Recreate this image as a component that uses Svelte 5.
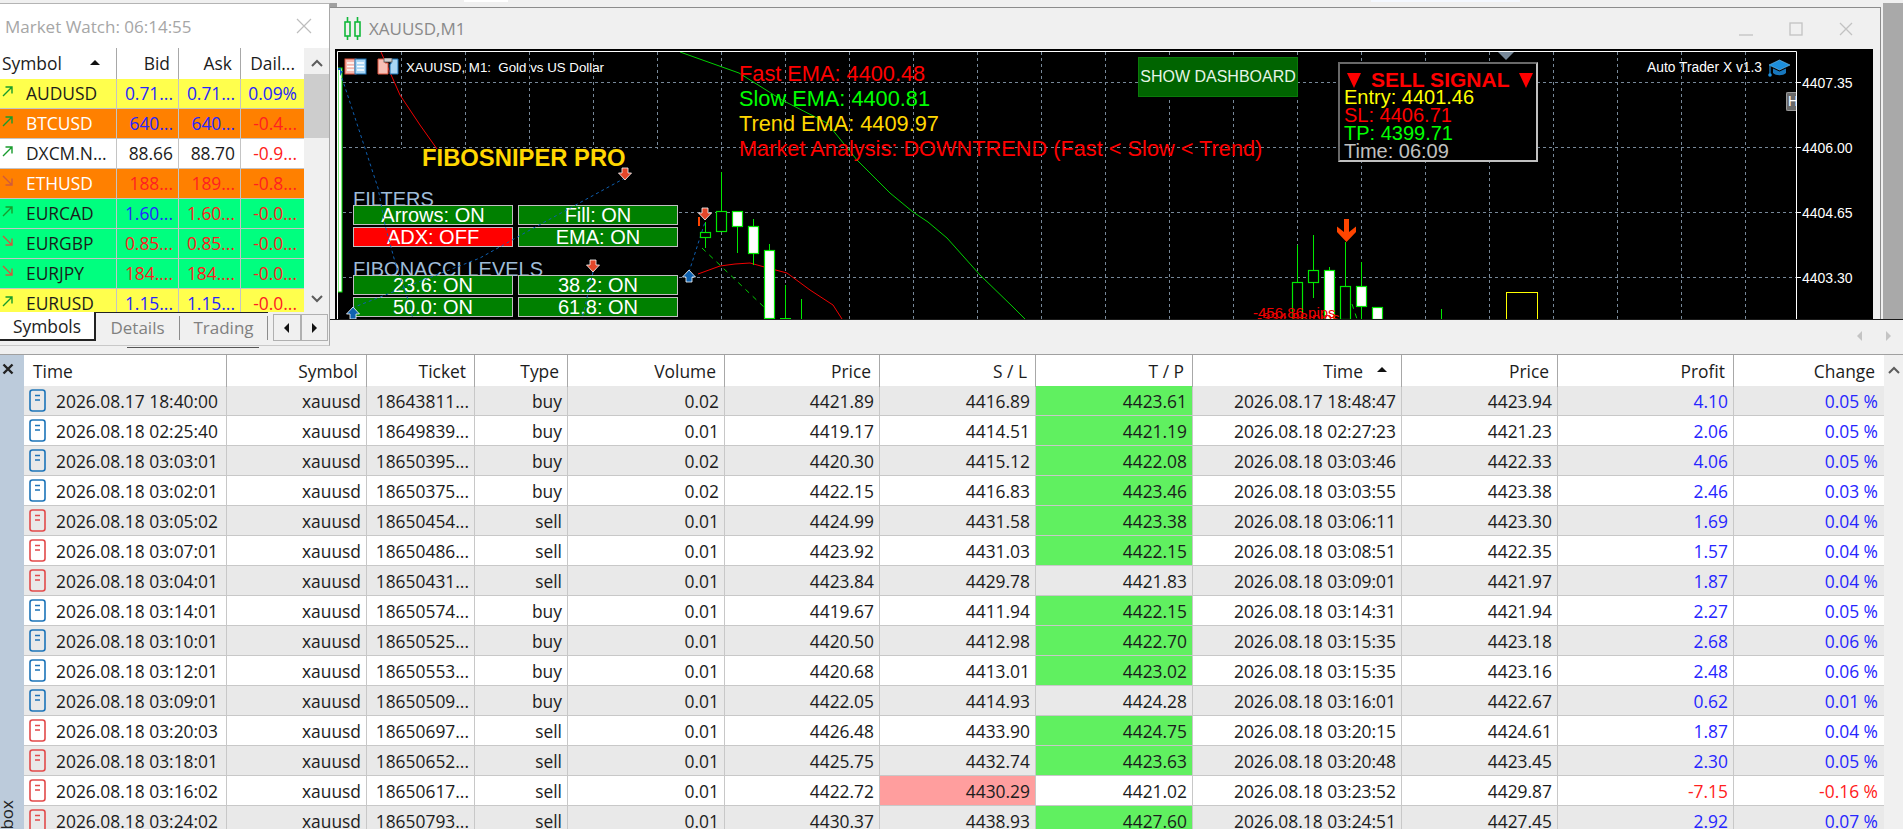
<script>
  const market = [
    { s: 'AUDUSD', d: 'up', bg: 'yellow', bid: '0.71...', bc: 'blue', ask: '0.71...', ac: 'blue', day: '0.09%', dc: 'blue' },
    { s: 'BTCUSD', d: 'up', bg: 'orange', bid: '640...', bc: 'blue', ask: '640...', ac: 'blue', day: '-0.4...', dc: 'red' },
    { s: 'DXCM.N...', d: 'up', bg: 'white', bid: '88.66', bc: 'ink', ask: '88.70', ac: 'ink', day: '-0.9...', dc: 'red' },
    { s: 'ETHUSD', d: 'down', bg: 'orange', bid: '188...', bc: 'red', ask: '189...', ac: 'red', day: '-0.8...', dc: 'red' },
    { s: 'EURCAD', d: 'up', bg: 'green', bid: '1.60...', bc: 'blue', ask: '1.60...', ac: 'red', day: '-0.0...', dc: 'red' },
    { s: 'EURGBP', d: 'down', bg: 'green', bid: '0.85...', bc: 'red', ask: '0.85...', ac: 'red', day: '-0.0...', dc: 'red' },
    { s: 'EURJPY', d: 'down', bg: 'green', bid: '184....', bc: 'red', ask: '184....', ac: 'red', day: '-0.0...', dc: 'red' },
    { s: 'EURUSD', d: 'up', bg: 'yellow', bid: '1.15...', bc: 'blue', ask: '1.15...', ac: 'blue', day: '-0.0...', dc: 'red' }
  ];

  const heads = ['Symbol', 'Ticket', 'Type', 'Volume', 'Price', 'S / L', 'T / P'];
  const trades = [
    ['2026.08.17 18:40:00', '18643811...', 'buy', '0.02', '4421.89', '4416.89', '4423.61', '2026.08.17 18:48:47', '4423.94', '4.10', '0.05 %', 'g'],
    ['2026.08.18 02:25:40', '18649839...', 'buy', '0.01', '4419.17', '4414.51', '4421.19', '2026.08.18 02:27:23', '4421.23', '2.06', '0.05 %', 'g'],
    ['2026.08.18 03:03:01', '18650395...', 'buy', '0.02', '4420.30', '4415.12', '4422.08', '2026.08.18 03:03:46', '4422.33', '4.06', '0.05 %', 'g'],
    ['2026.08.18 03:02:01', '18650375...', 'buy', '0.02', '4422.15', '4416.83', '4423.46', '2026.08.18 03:03:55', '4423.38', '2.46', '0.03 %', 'g'],
    ['2026.08.18 03:05:02', '18650454...', 'sell', '0.01', '4424.99', '4431.58', '4423.38', '2026.08.18 03:06:11', '4423.30', '1.69', '0.04 %', 'g'],
    ['2026.08.18 03:07:01', '18650486...', 'sell', '0.01', '4423.92', '4431.03', '4422.15', '2026.08.18 03:08:51', '4422.35', '1.57', '0.04 %', 'g'],
    ['2026.08.18 03:04:01', '18650431...', 'sell', '0.01', '4423.84', '4429.78', '4421.83', '2026.08.18 03:09:01', '4421.97', '1.87', '0.04 %', ''],
    ['2026.08.18 03:14:01', '18650574...', 'buy', '0.01', '4419.67', '4411.94', '4422.15', '2026.08.18 03:14:31', '4421.94', '2.27', '0.05 %', 'g'],
    ['2026.08.18 03:10:01', '18650525...', 'buy', '0.01', '4420.50', '4412.98', '4422.70', '2026.08.18 03:15:35', '4423.18', '2.68', '0.06 %', 'g'],
    ['2026.08.18 03:12:01', '18650553...', 'buy', '0.01', '4420.68', '4413.01', '4423.02', '2026.08.18 03:15:35', '4423.16', '2.48', '0.06 %', 'g'],
    ['2026.08.18 03:09:01', '18650509...', 'buy', '0.01', '4422.05', '4414.93', '4424.28', '2026.08.18 03:16:01', '4422.67', '0.62', '0.01 %', ''],
    ['2026.08.18 03:20:03', '18650697...', 'sell', '0.01', '4426.48', '4433.90', '4424.75', '2026.08.18 03:20:15', '4424.61', '1.87', '0.04 %', 'g'],
    ['2026.08.18 03:18:01', '18650652...', 'sell', '0.01', '4425.75', '4432.74', '4423.63', '2026.08.18 03:20:48', '4423.45', '2.30', '0.05 %', 'g'],
    ['2026.08.18 03:16:02', '18650617...', 'sell', '0.01', '4422.72', '4430.29', '4421.02', '2026.08.18 03:23:52', '4429.87', '-7.15', '-0.16 %', 'r'],
    ['2026.08.18 03:24:02', '18650793...', 'sell', '0.01', '4430.37', '4438.93', '4427.60', '2026.08.18 03:24:51', '4427.45', '2.92', '0.07 %', 'g']
  ];

  const vgrid = Array.from({ length: 22 }, (_, i) => 401.5 + 64 * i);
  const hgrid = [82.5, 147.5, 212.5, 277.5];
  const prices = [
    { p: '4407.35', y: 83 },
    { p: '4406.00', y: 148 },
    { p: '4404.65', y: 213 },
    { p: '4403.30', y: 278 }
  ];
  const filters = [
    { t: 'Arrows: ON' }, { t: 'Fill: ON' }, { t: 'ADX: OFF', off: true }, { t: 'EMA: ON' }
  ];
  const levels = [{ t: '23.6: ON' }, { t: '38.2: ON' }, { t: '50.0: ON' }, { t: '61.8: ON' }];

  // x centre, wick top, wick bottom, body top, body bottom, filled
  const candles = [
    [705.5, 222, 248, 232, 237, false],
    [721.5, 172, 232, 211, 231, false],
    [737.5, 226, 253, 211, 226, true],
    [753.5, 219, 265, 226, 253, true],
    [769.5, 244, 319, 250, 318, true],
    [1297.5, 245, 319, 282, 319, false],
    [1313.5, 235, 298, 270, 282, false],
    [1329.5, 267, 319, 270, 319, true],
    [1345.5, 242, 319, 286, 319, false],
    [1361.5, 262, 319, 286, 306, true],
    [1377.5, 307, 319, 307, 319, true]
  ];
  const downMarks = [[625, 174], [593, 266], [705, 214]];
  const upMarks = [[353, 313], [689, 276]];
</script>

<div class="app">
  <i class="sliver s1"></i>
  <i class="sliver s2"></i>
  <i class="sliver s3"></i>
  <div class="upper">
    <div class="mwcol">
      <section class="mw">
        <header class="mw-title">
          <span>Market Watch: 06:14:55</span>
          <svg class="mw-x" viewBox="0 0 16 16"><path d="M1 1 15 15M15 1 1 15" /></svg>
        </header>
        <div class="mw-body">
          <div class="mw-list">
            <div class="mw-head">
              <span class="mh-sym">Symbol<i class="sort"></i></span>
              <span class="mh-num">Bid</span>
              <span class="mh-num">Ask</span>
              <span class="mh-num last">Dail...</span>
            </div>
            {#each market as m}
              <div class="mw-row {m.bg}">
                <span class="m-sym">
                  <svg class="m-arrow {m.d}" viewBox="0 0 12 12">
                    {#if m.d === 'up'}
                      <path d="M1 11 10 2M3.5 2H10V8.5" />
                    {:else}
                      <path d="M1 1 10 10M10 3.5V10H3.5" />
                    {/if}
                  </svg>
                  <b class:light={m.bg === 'orange'}>{m.s}</b>
                </span>
                <span class="m-num {m.bc}">{m.bid}</span>
                <span class="m-num {m.ac}">{m.ask}</span>
                <span class="m-num last {m.dc}">{m.day}</span>
              </div>
            {/each}
          </div>
          <div class="mw-scroll">
            <svg class="chev" viewBox="0 0 12 8"><path d="M1 7 6 2 11 7" /></svg>
            <div class="thumb"></div>
            <svg class="chev down" viewBox="0 0 12 8"><path d="M1 1 6 6 11 1" /></svg>
          </div>
        </div>
        <div class="tabs">
          <span class="tab active">Symbols</span>
          <span class="tab"><em>Details</em></span>
          <span class="tab trading"><em>Trading</em></span>
          <span class="tab-nav">
            <span><i class="tri-l"></i></span>
            <span><i class="tri-r"></i></span>
          </span>
        </div>
      </section>
      <div class="grip"></div>
    </div>

    <div class="rightcol">
      <div class="top">
        <div class="win">
          <div class="titlebar">
            <svg class="tb-icon" viewBox="0 0 17 23">
              <path d="M3.5 0V23M13.5 0V23" />
              <rect x="1" y="5" width="5" height="14" />
              <rect x="11" y="5" width="5" height="14" />
            </svg>
            <span class="tb-name">XAUUSD,M1</span>
            <svg class="wc min" viewBox="0 0 14 14"><path d="M0 13H14" /></svg>
            <svg class="wc" viewBox="0 0 14 14"><rect x="1" y="1" width="12" height="12" /></svg>
            <svg class="wc" viewBox="0 0 14 14"><path d="M1 1 13 13M13 1 1 13" /></svg>
          </div>

          <div class="chart">
            <svg class="layer" viewBox="335 49 1538 270">
              <g class="grid">
                {#each vgrid as x}<line x1={x} x2={x} y1="52" y2="319" />{/each}
                {#each hgrid as y}<line x1="343" x2="1796" y1={y} y2={y} />{/each}
              </g>
              <g class="tick">
                {#each hgrid as y}<line x1="1796" x2="1801" y1={y} y2={y} />{/each}
              </g>
              <path class="ln red" d="M381 52 400 95 420 125 437 149" />
              <path class="ln grn" d="M680 52 739 73 782 100 827 123 857 160 890 193 913 212 928 222 947 238 980 275 1013 307 1025 319" />
              <path class="ln red" d="M698 274 720 266 735 264 750 263 768 268 787 273 810 290 833 305 842 319" />
              <path class="ln grn dash" d="M702 248 765 308" />
              <path class="ln grn dash" d="M1352 304 1357 319" />
              <rect class="yb" x="1506.5" y="292.5" width="31" height="30" />
              <rect class="wbar" x="338" y="68" width="4" height="224" />
              <path class="ln plot" d="M337.5 319V51.5H1796.5V319" />
              <polygon class="notch" points="1498,52 1514,52 1506,60" />
            </svg>

            <div class="dash">
              <div class="d-title">FIBOSNIPER PRO</div>
              <div class="d-head first">FILTERS</div>
              <div class="d-grid">
                {#each filters as b}
                  <div class="d-btn" class:off={b.off}>{b.t}</div>
                {/each}
              </div>
              <div class="d-head">FIBONACCI LEVELS</div>
              <div class="d-grid">
                {#each levels as b}
                  <div class="d-btn">{b.t}</div>
                {/each}
              </div>
            </div>

            <svg class="layer" viewBox="335 49 1538 270">
              <path class="dots" d="M342 78 378 188 385 225 395 262 406 293 413 319" />
              <path class="dots" d="M352 308 480 258 530 230 625 178" />
              <path class="dots" d="M689 272 705 222" />
              <path class="dots" d="M593 272 582 319" />
              {#each candles as c}
                <line class="wick" x1={c[0]} x2={c[0]} y1={c[1]} y2={c[2]} />
                <rect class="body" class:fill={c[5]} x={c[0] - 5} y={c[3] + 0.5} width="10" height={c[4] - c[3]} />
              {/each}
              <path class="wick" d="M785.5 285V318M780 318.5H791M801.5 299V319M1441.5 309V319" />
              {#each downMarks as a}
                <path class="mark-d" transform="translate({a[0]} {a[1]})" d="M-3 -6H3V-1H6.5L0 6 -6.5 -1H-3Z" />
              {/each}
              {#each upMarks as a}
                <path class="mark-u" transform="translate({a[0]} {a[1]})" d="M-3 6H3V1H6.5L0 -6 -6.5 1H-3Z" />
              {/each}
              <path class="mark-b" d="M338 68H341V71H343L340 76H340V70H338Z" />
              <rect class="oj" x="698" y="217" width="2" height="9" />
              <path class="big-arrow" d="M1344 219H1349V232L1356 226.500V232L1346.500 242 1337 232V226.500L1344 232Z" />
            </svg>

            <svg class="ic-table" viewBox="0 0 23 17">
              <rect class="p" x="1" y="1" width="11" height="15" />
              <rect class="b" x="11" y="1" width="11" height="15" />
              <path class="rw" d="M3 5H10M3 8.500H10M3 12H10" />
              <path class="rb" d="M13 5H20M13 8.500H20M13 12H20" />
            </svg>
            <svg class="ic-save" viewBox="0 0 22 17">
              <path class="p" d="M1 1H8V5H11V16H1Z" />
              <path class="b" d="M14 1H21V16H13V6H14Z" />
              <rect class="gr" x="7" y="0" width="8" height="4" />
            </svg>
            <div class="sym">XAUUSD, M1:  Gold vs US Dollar</div>

            <div class="ema">
              <div class="red-t">Fast EMA: 4400.48</div>
              <div class="lime-t">Slow EMA: 4400.81</div>
              <div class="gold-t">Trend EMA: 4409.97</div>
              <div class="red-t">Market Analysis: DOWNTREND (Fast &lt; Slow &lt; Trend)</div>
            </div>

            <div class="show">SHOW DASHBOARD</div>

            <div class="signal">
              <div class="sig-head"><i></i><b>SELL SIGNAL</b><i></i></div>
              <div class="yel-t">Entry: 4401.46</div>
              <div class="red-t">SL: 4406.71</div>
              <div class="lime-t">TP: 4399.71</div>
              <div class="sil-t">Time: 06:09</div>
            </div>

            <div class="auto">Auto Trader X v1.3</div>
            <svg class="ic-cap" viewBox="0 0 23 19">
              <path class="cap-a" d="M11.500 1 22 6 11.500 11 1 6Z" />
              <path class="cap-b" d="M5 9.500V14C8 17 15 17 18 14V9.500L11.500 12.500Z" />
              <path class="cap-c" d="M2 6V15" />
              <circle class="cap-d" cx="2" cy="16" r="1.800" />
            </svg>
            <div class="hbtn">H</div>

            <div class="pips one">-456.86 pips</div>
            <div class="pips two">-334.88 pips</div>

            {#each prices as p}
              <div class="price" style="top:{p.y - 59}px">{p.p}</div>
            {/each}
          </div>
        </div>
        <div class="gutter"></div>
      </div>
      <div class="band">
        <i class="tri-l soft"></i>
        <i class="tri-r soft"></i>
      </div>
    </div>
  </div>

  <div class="lower">
    <aside class="strip">
      <svg class="strip-x" viewBox="0 0 12 12"><path d="M1.500 1.500 10.500 10.500M10.500 1.500 1.500 10.500" /></svg>
      <span class="strip-label">Toolbox</span>
    </aside>
    <div class="table">
      <div class="tr head">
        <div class="th left">Time</div>
        {#each heads as h}<div class="th">{h}</div>{/each}
        <div class="th timeclose">Time<i class="sort"></i></div>
        <div class="th">Price</div>
        <div class="th">Profit</div>
        <div class="th end">Change</div>
      </div>
      {#each trades as t, i}
        <div class="tr row" class:alt={i % 2 === 0}>
          <div class="td first">
            <svg class="doc {t[2]}" viewBox="0 0 17 23">
              <rect x="1" y="1" width="15" height="21" rx="2.500" />
              <path d="M6 6.500H11M6 11H11" />
            </svg>
            {t[0]}
          </div>
          <div class="td">xauusd</div>
          <div class="td">{t[1]}</div>
          <div class="td">{t[2]}</div>
          <div class="td">{t[3]}</div>
          <div class="td">{t[4]}</div>
          <div class="td" class:hit-r={t[11] === 'r'}>{t[5]}</div>
          <div class="td tp" class:hit-g={t[11] === 'g'}>{t[6]}</div>
          <div class="td">{t[7]}</div>
          <div class="td">{t[8]}</div>
          <div class="td" class:pos={t[11] !== 'r'} class:neg={t[11] === 'r'}>{t[9]}</div>
          <div class="td end" class:pos={t[11] !== 'r'} class:neg={t[11] === 'r'}>{t[10]}</div>
        </div>
      {/each}
    </div>
    <div class="vscroll">
      <svg class="chev" viewBox="0 0 12 8"><path d="M1 7 6 2 11 7" /></svg>
    </div>
  </div>
</div>

<style>
  :global(body) {
    margin: 0;
    background: #f0f0f0;
  }
  .app {
    position: relative;
    width: 1903px;
    height: 829px;
    overflow: hidden;
    background: #f0f0f0;
    font-family: "Open Sans", "Noto Sans", sans-serif;
    font-size: 17px;
    color: #1c1c1c;
  }
  .sliver {
    position: absolute;
    top: 0;
    height: 2px;
    background: #fff;
  }
  .s1 { left: 464px; width: 44px; }
  .s2 { left: 1371px; width: 149px; background: #f4f8ff; }
  .s3 { left: 330px; top: 3px; width: 7px; height: 4px; background: #a0a0a0; }
  .upper {
    display: flex;
    height: 355px;
    border-bottom: 1px solid #a0a0a0;
    box-sizing: border-box;
  }

  /* market watch */
  .mwcol {
    width: 330px;
    flex: none;
    padding-top: 3px;
    box-sizing: border-box;
  }
  .mw {
    height: 343px;
    box-sizing: border-box;
    background: #fff;
    border-top: 1px solid #b4b4b4;
    border-right: 1px solid #a8a8a8;
    border-bottom: 1px solid #c8c8c8;
    display: flex;
    flex-direction: column;
  }
  .grip {
    height: 1px;
    width: 132px;
    margin: 1px 0 0 127px;
    background: #555;
  }
  .mw-title {
    height: 44px;
    flex: none;
    display: flex;
    align-items: center;
    justify-content: space-between;
    padding: 0 17px 0 5px;
    color: #a6a6a6;
  }
  .mw-x {
    width: 16px;
    height: 16px;
  }
  .mw-x path {
    stroke: #bdbdbd;
    stroke-width: 1.2;
    fill: none;
  }
  .mw-body {
    height: 264px;
    flex: none;
    display: flex;
    overflow: hidden;
  }
  .mw-list {
    width: 304px;
    flex: none;
    font-size: 17.4px;
  }
  .mw-head {
    height: 31px;
    display: grid;
    grid-template-columns: 117px 62px 62px 63px;
    line-height: 30px;
  }
  .mh-sym {
    padding-left: 2px;
    display: flex;
    position: relative;
    border-right: 1px solid #a8a8a8;
  }
  .sort {
    width: 0;
    height: 0;
    border-left: 5px solid transparent;
    border-right: 5px solid transparent;
    border-bottom: 5px solid #111;
  }
  .mh-sym .sort {
    position: absolute;
    left: 90px;
    top: 12px;
  }
  .mh-num {
    text-align: right;
    padding-right: 8px;
    border-right: 1px solid #a8a8a8;
  }
  .mh-num.last {
    border-right: 0;
    padding-right: 9px;
  }
  .mw-row {
    height: 30px;
    box-sizing: border-box;
    display: grid;
    grid-template-columns: 117px 62px 62px 63px;
    border-bottom: 1px solid #c4c4c4;
    line-height: 29px;
  }
  .mw-row.yellow { background: #ffff4d; }
  .mw-row.orange { background: #ff8000; }
  .mw-row.white { background: #fff; }
  .mw-row.green { background: #00ff7f; }
  .m-sym {
    display: flex;
    align-items: center;
    border-right: 1px solid #c4c4c4;
    overflow: hidden;
  }
  .m-sym b {
    font-weight: 400;
    margin-left: 12px;
  }
  .m-sym b.light { color: #fff; }
  .m-arrow {
    width: 12px;
    height: 12px;
    margin: -5px 0 0 2px;
    flex: none;
    fill: none;
    stroke-width: 1.4;
  }
  .m-arrow.up { stroke: #189c2c; }
  .m-arrow.down { stroke: #cf5a3c; }
  .m-num {
    text-align: right;
    padding-right: 5px;
    border-right: 1px solid #c4c4c4;
    white-space: nowrap;
    overflow: hidden;
  }
  .m-num.last {
    border-right: 0;
    padding-right: 7px;
  }
  .m-num.blue { color: #2626ff; }
  .m-num.red { color: #ff2020; }
  .m-num.ink { color: #1c1c1c; }
  .mw-scroll {
    flex: 1;
    background: #f0f0f0;
    display: flex;
    flex-direction: column;
    align-items: center;
  }
  .chev {
    width: 12px;
    height: 8px;
    fill: none;
    stroke: #5c5c5c;
    stroke-width: 2;
    flex: none;
  }
  .mw-scroll .chev {
    margin-top: 11px;
  }
  .mw-scroll .chev.down {
    margin-top: 157px;
  }
  .thumb {
    width: 100%;
    height: 64px;
    flex: none;
    margin-top: 7px;
    background: #cdcdcd;
  }
  .tabs {
    flex: 1;
    display: flex;
    background: #f0f0f0;
    line-height: 29px;
    color: #808080;
  }
  .tab {
    height: 30px;
    box-sizing: border-box;
    border-top: 1px solid #222;
    width: 84px;
    padding-top: 3px;
    text-align: center;
  }
  .tab em {
    font-style: normal;
    display: block;
    height: 24px;
    line-height: 24px;
    border-right: 1px solid #8c8c8c;
  }
  .tab.trading {
    width: 88px;
  }
  .tab.active {
    width: 96px;
    height: 29px;
    padding: 0;
    font-size: 17.4px;
    line-height: 28px;
    background: #fff;
    color: #222;
    border-top: 0;
    border-right: 2px solid #222;
    border-bottom: 2px solid #222;
  }
  .tab-nav {
    margin: 2px 0 0 5px;
    height: 27px;
    width: 55px;
    box-sizing: border-box;
    border: 1px solid #b0b0b0;
    display: flex;
  }
  .tab-nav span {
    flex: 1;
    display: flex;
    align-items: center;
    justify-content: center;
  }
  .tab-nav span + span {
    border-left: 2px solid #b0b0b0;
  }
  .tri-l, .tri-r {
    display: block;
    width: 0;
    height: 0;
    border-top: 5px solid transparent;
    border-bottom: 5px solid transparent;
  }
  .tri-l { border-right: 5px solid #111; }
  .tri-r { border-left: 5px solid #111; }

  /* chart window */
  .rightcol {
    flex: 1;
    display: flex;
    flex-direction: column;
    min-width: 0;
  }
  .top {
    height: 319px;
    display: flex;
  }
  .win {
    width: 1551px;
    flex: none;
    box-sizing: border-box;
    margin-top: 7px;
    border-top: 1px solid #8c8c8c;
    border-right: 1px solid #8c8c8c;
    padding-left: 5px;
    display: flex;
    flex-direction: column;
  }
  .gutter {
    width: 20px;
    margin: 3px 0 0 2px;
    background: #a9a9a9;
  }
  .titlebar {
    height: 41px;
    width: 1538px;
    flex: none;
    display: flex;
    align-items: center;
    padding: 0 20px 0 9px;
    box-sizing: border-box;
  }
  .tb-icon {
    width: 17px;
    height: 23px;
    fill: #f0f0f0;
    stroke: #12b83a;
    stroke-width: 1.6;
    flex: none;
  }
  .tb-name {
    margin-left: 8px;
    color: #8a8a8a;
    margin-right: auto;
  }
  .wc {
    width: 14px;
    height: 14px;
    margin-left: 36px;
    fill: none;
    stroke: #c2c2c2;
    stroke-width: 1.3;
    flex: none;
  }
  .chart {
    position: relative;
    width: 1538px;
    height: 270px;
    background: #000;
    overflow: hidden;
    font-family: "Liberation Sans", Arial, sans-serif;
  }
  .layer {
    position: absolute;
    left: 0;
    top: 0;
    width: 1538px;
    height: 270px;
  }
  .grid line {
    stroke: #778899;
    stroke-dasharray: 3 3;
    stroke-width: 1;
  }
  .tick line { stroke: #fff; }
  .ln { fill: none; stroke-width: 1; }
  .ln.red { stroke: #f00000; }
  .ln.grn { stroke: #00d000; }
  .ln.dash { stroke-dasharray: 5 5; }
  .ln.plot { stroke: #fff; }
  .yb { fill: none; stroke: #ffff00; }
  .wbar { fill: #fff; stroke: #00e000; stroke-width: 1; }
  .notch { fill: #778899; }
  .dots {
    fill: none;
    stroke: #0f5fb0;
    stroke-width: 1;
    stroke-dasharray: 3 3;
  }
  .wick {
    stroke: #00e800;
    stroke-width: 1;
    fill: none;
  }
  .body {
    fill: #000;
    stroke: #00e800;
    stroke-width: 1.2;
  }
  .body.fill { fill: #fff; }
  .mark-d {
    fill: #e4472a;
    stroke: #fff;
    stroke-width: 0.8;
  }
  .mark-u {
    fill: #0f62b0;
    stroke: #fff;
    stroke-width: 0.8;
  }
  .mark-b { fill: #1266b8; }
  .oj { fill: #ff4500; }
  .big-arrow { fill: #ff4500; }

  .dash {
    position: absolute;
    left: 18px;
    top: 100px;
    width: 325px;
    height: 170px;
    background: #000;
  }
  .d-title {
    margin-left: 69px;
    height: 18px;
    line-height: 18px;
    font-size: 23.8px;
    font-weight: 700;
    color: #ffd700;
    white-space: nowrap;
  }
  .d-head {
    height: 15px;
    line-height: 19px;
    margin-top: 13px;
    font-size: 20px;
    color: #9fbcd8;
    white-space: nowrap;
  }
  .d-head.first { margin-top: 23px; }
  .d-grid {
    display: grid;
    grid-template-columns: 160px 160px;
    grid-auto-rows: 20px;
    column-gap: 5px;
    row-gap: 2px;
    position: relative;
  }
  .d-btn {
    box-sizing: border-box;
    background: #008000;
    border: 1px solid #c0c0c0;
    color: #fff;
    font-size: 20px;
    line-height: 18px;
    text-align: center;
    white-space: nowrap;
  }
  .d-btn.off { background: #ff0000; }

  .ic-table {
    position: absolute;
    left: 9px;
    top: 9px;
    width: 23px;
    height: 17px;
  }
  .ic-table .p { fill: #f6b7ae; stroke: #e0523c; }
  .ic-table .b { fill: #a9d6f5; stroke: #1b6fb0; }
  .ic-table .rw, .ic-table .rb { stroke: #fff; stroke-width: 1.4; fill: none; }
  .ic-save {
    position: absolute;
    left: 42px;
    top: 9px;
    width: 22px;
    height: 17px;
  }
  .ic-save .p { fill: #f6c0b6; stroke: #e0523c; }
  .ic-save .b { fill: #a9d6f5; stroke: #1b6fb0; }
  .ic-save .gr { fill: #cfcfcf; stroke: #555; stroke-width: 0.8; }

  .sym {
    position: absolute;
    left: 71px;
    top: 9px;
    line-height: 20px;
    font-size: 13.3px;
    color: #fff;
    white-space: pre;
  }
  .ema {
    position: absolute;
    left: 404px;
    top: 12px;
    font-size: 21.75px;
    line-height: 25px;
    white-space: nowrap;
  }
  .red-t { color: #ff0000; }
  .lime-t { color: #00ff00; }
  .gold-t { color: #ffd700; }
  .yel-t { color: #ffff00; }
  .sil-t { color: #c0c0c0; }

  .show {
    position: absolute;
    left: 803px;
    top: 8px;
    width: 160px;
    height: 40px;
    box-sizing: border-box;
    background: #006400;
    border: 1px solid #0a7a0a;
    color: #e6f5e6;
    font-size: 16px;
    line-height: 38px;
    text-align: center;
    white-space: nowrap;
  }
  .signal {
    position: absolute;
    left: 1003px;
    top: 13px;
    width: 200px;
    height: 100px;
    box-sizing: border-box;
    background: #000;
    border: 2px solid;
    border-color: #696969 #c0c0c0 #c0c0c0 #696969;
    padding: 8px 0 0 4px;
    font-size: 20px;
    line-height: 18px;
    white-space: nowrap;
  }
  .sig-head {
    display: flex;
    align-items: center;
    height: 16px;
    margin-left: 3px;
    color: #ff0000;
  }
  .sig-head b {
    font-size: 21px;
    margin: 0 10px;
  }
  .sig-head i {
    width: 0;
    height: 0;
    border-left: 7.5px solid transparent;
    border-right: 7.5px solid transparent;
    border-top: 15px solid #ff0000;
  }
  .auto {
    position: absolute;
    left: 1312px;
    top: 9px;
    line-height: 20px;
    font-size: 13.8px;
    color: #fff;
    white-space: nowrap;
  }
  .ic-cap {
    position: absolute;
    left: 1433px;
    top: 10px;
    width: 23px;
    height: 19px;
  }
  .cap-a { fill: #1d8fdc; stroke: #7cc6f4; stroke-width: 0.6; }
  .cap-b { fill: #1877bd; }
  .cap-c { stroke: #1d8fdc; stroke-width: 1.2; fill: none; }
  .cap-d { fill: #1d8fdc; }
  .hbtn {
    position: absolute;
    left: 1451px;
    top: 43px;
    width: 10px;
    height: 19px;
    box-sizing: border-box;
    background: #696969;
    border: 1px solid #9a9a9a;
    border-right: 0;
    border-radius: 2px 0 0 2px;
    color: #fff;
    font-size: 14px;
    line-height: 17px;
    padding-left: 1px;
    overflow: hidden;
  }
  .pips {
    position: absolute;
    font-size: 15px;
    line-height: 18px;
    color: #f00000;
    white-space: nowrap;
  }
  .pips.one { left: 918px; top: 255px; }
  .pips.two { left: 922px; top: 260px; }
  .price {
    position: absolute;
    left: 1467px;
    line-height: 20px;
    font-size: 14px;
    color: #fff;
  }
  .band {
    height: 35px;
    box-sizing: border-box;
    border-top: 1px solid #1a1a1a;
    display: flex;
    align-items: center;
    justify-content: flex-end;
    gap: 24px;
    padding: 0 12px 2px 0;
  }
  .tri-l.soft { border-right-color: #c4c4c4; }
  .tri-r.soft { border-left-color: #c4c4c4; }

  /* terminal table */
  .lower {
    display: flex;
    height: 474px;
    overflow: hidden;
  }
  .strip {
    width: 24px;
    flex: none;
    background: #bccbdb;
    position: relative;
    overflow: hidden;
  }
  .strip-x {
    position: absolute;
    left: 2px;
    top: 8px;
    width: 12px;
    height: 12px;
    fill: none;
    stroke: #222;
    stroke-width: 2.4;
  }
  .strip-label {
    position: absolute;
    left: -2px;
    top: 445px;
    writing-mode: vertical-rl;
    transform: rotate(180deg);
    line-height: 17px;
    color: #222;
  }
  .table {
    width: 1860px;
    flex: none;
    background: #fff;
    font-size: 17.4px;
  }
  .tr {
    display: grid;
    grid-template-columns: 203px 140px 108px 93px 157px 155px 156px 157px 209px 156px 176px 150px;
  }
  .head {
    height: 31px;
    background: #fff;
  }
  .th {
    box-sizing: border-box;
    text-align: right;
    padding-right: 8px;
    line-height: 32px;
    border-right: 1px solid #a8a8a8;
    position: relative;
  }
  .th.left {
    text-align: left;
    padding: 0 0 0 9px;
  }
  .th.end {
    border-right: 0;
    padding-right: 9px;
  }
  .th.timeclose {
    padding-right: 38px;
  }
  .th.timeclose .sort {
    position: absolute;
    right: 14px;
    top: 12px;
  }
  .row {
    height: 30px;
    box-sizing: border-box;
    border-bottom: 1px solid #c8c8c8;
    background: #fff;
  }
  .row.alt { background: #e9e9e9; }
  .td {
    box-sizing: border-box;
    text-align: right;
    padding-right: 5px;
    line-height: 30px;
    border-right: 1px solid #c8c8c8;
    white-space: nowrap;
    overflow: hidden;
  }
  .td.first {
    text-align: left;
    padding: 1px 0 0 5px;
    display: flex;
    gap: 10px;
    align-items: center;
  }
  .td.end {
    border-right: 0;
    padding-right: 6px;
  }
  .hit-g { background: #60f060; }
  .hit-r { background: #ff9e9e; }
  .pos { color: #2626ff; }
  .neg { color: #ff2020; }
  .doc {
    width: 17px;
    height: 23px;
    flex: none;
    fill: none;
    stroke-width: 1.6;
    margin-top: -2px;
  }
  .doc.buy { stroke: #1c74b8; }
  .doc.sell { stroke: #e24a4a; }
  .vscroll {
    flex: 1;
    display: flex;
    justify-content: center;
    padding-top: 11px;
    box-sizing: border-box;
  }
</style>
